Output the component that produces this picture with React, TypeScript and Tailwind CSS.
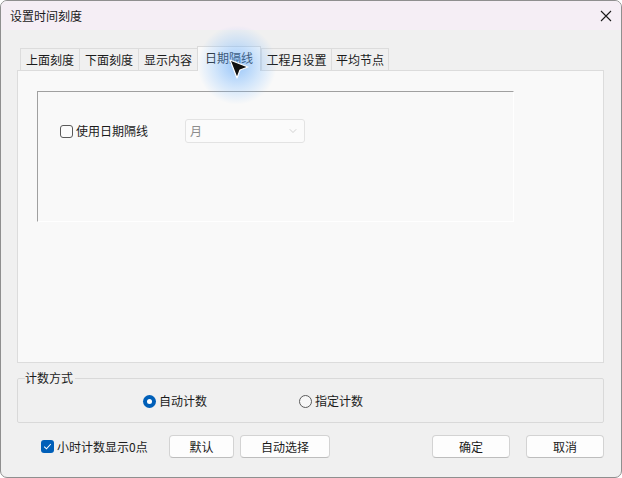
import { ChevronDown } from 'lucide-react';

const tabs = [
  { label: '上面刻度', w: 'w-[59px]' },
  { label: '下面刻度', w: 'w-[59px]' },
  { label: '显示内容', w: 'w-[59px]' },
  { label: '日期隔线', w: 'w-[64px]', active: true },
  { label: '工程月设置', w: 'w-[70px]' },
  { label: '平均节点', w: 'w-[58px]' },
];

function Button({ label, w }: { label: string; w: string }) {
  return (
    <button
      className={`${w} h-[23px] rounded-[4px] border border-[#d3d3d3] border-b-[#bdbdbd] bg-[#fdfdfd] text-[12px] text-[#1b1b1b] flex items-center justify-center`}
    >
      {label}
    </button>
  );
}

export default function App() {
  return (
    <div
      className="relative w-[622px] h-[478px] bg-[#f0f0f0] border border-[#8f8f8f] rounded-[7px] overflow-hidden text-[12px] text-[#1b1b1b] leading-none"
      style={{ fontFamily: '"Noto Sans CJK SC", "Noto Sans", sans-serif' }}
    >
      {/* title bar */}
      <div className="h-[29px] bg-[#f5eef5] flex items-center justify-between pl-[9px] pr-[9px]">
        <span className="text-[12px] text-[#1a1a1a]">设置时间刻度</span>
        <svg width="12" height="12" viewBox="0 0 12 12" className="mt-[1px]">
          <path d="M1 1 L11 11 M11 1 L1 11" stroke="#1a1a1a" strokeWidth="1.1" />
        </svg>
      </div>

      {/* tab strip */}
      <div className="mt-[16px] ml-[19px] h-[24px] flex items-end">
        {tabs.map((t) =>
          t.active ? (
            <div
              key={t.label}
              className={`${t.w} h-[25px] -mb-px relative z-10 bg-[#f9f9f9] border border-b-0 border-[#dadada] flex items-center justify-center pb-[2px]`}
            >
              {t.label}
            </div>
          ) : (
            <div
              key={t.label}
              className={`${t.w} h-[22px] bg-[#f0f0f0] border-t border-l last:border-r border-[#dcdcdc] flex items-center justify-center`}
            >
              {t.label}
            </div>
          )
        )}
      </div>

      {/* tab page */}
      <div className="ml-[16px] w-[587px] h-[293px] bg-[#f9f9f9] border border-[#dcdcdc]">
        <div className="ml-[19px] mt-[20px] w-[477px] h-[131px] border-t border-l border-[#a0a0a0] border-r border-b border-r-[#ffffff] border-b-[#ffffff]">
          <div className="mt-[27px] pl-[22px] flex items-center">
            <div className="w-[125px] flex items-center">
              <span className="w-[13px] h-[13px] rounded-[3px] border border-[#5a5a5a] bg-[#fbfbfb]" />
              <span className="ml-[3px]">使用日期隔线</span>
            </div>
            <div className="w-[120px] h-[24px] rounded-[3px] border border-[#e3e3e3] bg-[#fbfbfb] flex items-center justify-between pl-[4px] pr-[5px] text-[#8c8c8c]">
              <span>月</span>
              <ChevronDown size={12} strokeWidth={1.2} color="#b5b5b5" />
            </div>
          </div>
        </div>
      </div>

      {/* count mode group */}
      <div className="relative mt-[15px] ml-[16px] w-[587px] h-[45px] border border-[#d9d9d9] rounded-[2px] flex items-center">
        <span className="absolute -top-[7px] left-[7px] bg-[#f0f0f0] pr-[2px]">计数方式</span>
        <div className="pl-[125px] flex items-center mt-[1px]">
          <div className="w-[156px] flex items-center">
            <span className="w-[13px] h-[13px] rounded-full bg-[#005fb8] flex items-center justify-center">
              <span className="w-[5px] h-[5px] rounded-full bg-white" />
            </span>
            <span className="ml-[3px]">自动计数</span>
          </div>
          <div className="flex items-center">
            <span className="w-[13px] h-[13px] rounded-full border border-[#5a5a5a] bg-[#f7f7f7]" />
            <span className="ml-[3px]">指定计数</span>
          </div>
        </div>
      </div>

      {/* bottom row */}
      <div className="mt-[12px] pl-[40px] flex items-center">
        <span className="w-[13px] h-[13px] rounded-[3px] bg-[#005fb8] flex items-center justify-center">
          <svg width="9" height="9" viewBox="0 0 9 9">
            <path d="M1.2 4.6 L3.5 6.8 L7.8 2" stroke="white" strokeWidth="1.1" fill="none" />
          </svg>
        </span>
        <span className="ml-[3px] w-[112px]">小时计数显示0点</span>
        <Button label="默认" w="w-[65px]" />
        <div className="ml-[6px]">
          <Button label="自动选择" w="w-[90px]" />
        </div>
        <div className="ml-[102px]">
          <Button label="确定" w="w-[78px]" />
        </div>
        <div className="ml-[16px]">
          <Button label="取消" w="w-[78px]" />
        </div>
      </div>

      {/* pointer with click halo */}
      <div className="absolute z-20 left-[196px] top-[24px] w-[80px] h-[80px] rounded-full bg-[radial-gradient(circle,rgba(90,165,250,0.6)_0%,rgba(120,185,255,0.3)_40%,rgba(160,205,255,0)_70%)]" />
      <svg width="22" height="22" viewBox="0 0 22 22" className="absolute z-30 left-[227px] top-[57px]">
        <path d="M2 2 L20 9 L12 12 L9 20 Z" fill="#111" stroke="#fff" strokeWidth="1.2" strokeLinejoin="round" />
      </svg>
    </div>
  );
}
